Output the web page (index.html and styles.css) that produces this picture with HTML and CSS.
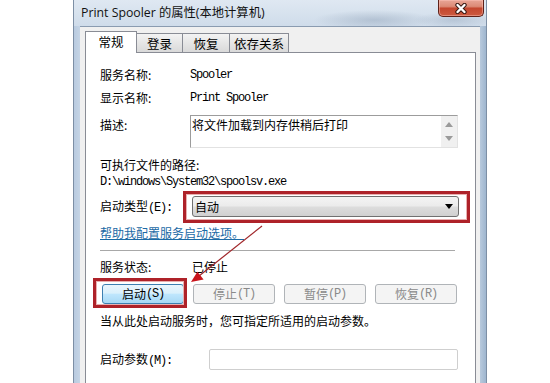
FILE: index.html
```html
<!DOCTYPE html>
<html>
<head>
<meta charset="utf-8">
<link rel="stylesheet" href="styles.css">
</head>
<body>
<div class="window">
  <div class="titlebar">
    <span class="title">Print Spooler 的属性(本地计算机)</span>
    <div class="close">
      <svg width="14" height="11" viewBox="0 0 14 11">
        <path d="M3.5 2 L10.5 9 M10.5 2 L3.5 9" stroke="#3a1a14" stroke-width="4.4" stroke-linecap="round"/>
        <path d="M3.5 2 L10.5 9 M10.5 2 L3.5 9" stroke="#ffffff" stroke-width="2.4" stroke-linecap="round"/>
      </svg>
    </div>
  </div>
  <div class="client">
    <div class="tabs">
      <div class="tab active">常规</div>
      <div class="tab t2">登录</div>
      <div class="tab t3">恢复</div>
      <div class="tab t4">依存关系</div>
    </div>
    <div class="panel">
      <div class="row r1"><span class="label">服务名称:</span><span class="mono">Spooler</span></div>
      <div class="row r2"><span class="label">显示名称:</span><span class="mono">Print Spooler</span></div>
      <div class="row desc-row">
        <span class="label desc-label">描述:</span>
        <div class="desc-box">
          <span class="desc-text">将文件加载到内存供稍后打印</span>
          <div class="scroll">
            <svg width="8" height="5" viewBox="0 0 8 5"><path d="M0 5 L4 0 L8 5 Z" fill="#9a9a9a"/></svg>
            <svg width="8" height="5" viewBox="0 0 8 5"><path d="M0 0 L4 5 L8 0 Z" fill="#9a9a9a"/></svg>
          </div>
        </div>
      </div>
      <div class="row exe-label">可执行文件的路径:</div>
      <div class="row path mono">D:\windows\System32\spoolsv.exe</div>
      <div class="row combo-row">
        <span class="label combo-label">启动类型<span class="mk">(E):</span></span>
        <div class="combo">
          <span class="combo-text">自动</span>
          <svg width="8" height="5" viewBox="0 0 8 5"><path d="M0 0 L8 0 L4 5 Z" fill="#000"/></svg>
        </div>
      </div>
      <a class="link">帮助我配置服务启动选项。</a>
      <div class="sep"></div>
      <div class="row status"><span class="label">服务状态:</span><span class="status-val">已停止</span></div>
      <div class="buttons">
        <div class="btn start">启动<span class="mk">(S)</span></div>
        <div class="btn">停止<span class="mk">(T)</span></div>
        <div class="btn">暂停<span class="mk">(P)</span></div>
        <div class="btn">恢复<span class="mk">(R)</span></div>
      </div>
      <div class="row hint">当从此处启动服务时，您可指定所适用的启动参数。</div>
      <div class="row param"><span class="label param-label">启动参数<span class="mk">(M):</span></span><div class="param-input"></div></div>
    </div>
  </div>
</div>
<svg class="arrow" width="550" height="383" viewBox="0 0 550 383">
  <line x1="262" y1="226" x2="199" y2="276" stroke="#a0262a" stroke-width="1.2"/>
  <path d="M191 282 L197.4 271.8 L203.6 279.6 Z" fill="#c8141c"/>
</svg>
</body>
</html>
```

FILE: styles.css
```css
* { box-sizing: border-box; }
html, body { margin: 0; padding: 0; }
body {
  width: 550px;
  height: 383px;
  overflow: hidden;
  background: #ffffff;
  font-family: "Noto Sans CJK SC", sans-serif;
  font-size: 12px;
  color: #000;
  position: relative;
}
.window {
  margin-left: 73px;
  width: 414px;
  height: 400px;
  border-left: 1px solid #7d8fa5;
  border-right: 1px solid #7d8fa5;
  background: linear-gradient(90deg, #b9cbe0 0%, #d2deeb 3%, #d2deeb 97%, #9fb6cf 100%);
  display: flex;
  flex-direction: column;
}
.titlebar {
  height: 26px;
  display: flex;
  align-items: flex-start;
  padding-left: 7px;
  padding-right: 2px;
  background:
    radial-gradient(ellipse 60px 10px at 300px 20px, rgba(120,140,165,0.35), rgba(120,140,165,0) 100%),
    radial-gradient(ellipse 40px 8px at 380px 20px, rgba(120,140,165,0.3), rgba(120,140,165,0) 100%),
    linear-gradient(180deg, #dfe8f2 0%, #cfdcea 100%);
}
.title {
  line-height: 26px;
  font-family: "Open Sans", "Noto Sans CJK SC", sans-serif;
  font-size: 12.3px;
  color: #111;
}
.close {
  margin-left: auto;
  width: 46px;
  height: 17px;
  border: 1px solid #5e2119;
  border-top: none;
  border-radius: 0 0 5px 5px;
  background: linear-gradient(180deg, #e8a596 0%, #dc8a76 40%, #c4472f 52%, #cc5a40 100%);
  display: flex;
  align-items: center;
  justify-content: center;
  box-shadow: inset 0 0 0 1px rgba(255,200,190,0.45);
}
.client {
  flex: 1;
  margin: 0 6px;
  background: #f0f0f0;
  border-top: 1px solid #8a9bb0;
  padding: 4px 4px 0 5px;
  display: flex;
  flex-direction: column;
}
.tabs {
  display: flex;
  align-items: flex-end;
  height: 22px;
  margin-bottom: -1px;
  position: relative;
  z-index: 1;
}
.tab {
  height: 19px;
  margin-bottom: 1px;
  border: 1px solid #898c95;
  border-bottom: none;
  border-left: none;
  background: linear-gradient(180deg, #f3f3f3 0%, #e6e6e6 50%, #d9d9d9 100%);
  display: flex;
  align-items: center;
  justify-content: center;
  line-height: 18px;
  padding-top: 1px;
  font-size: 12.5px;
}
.tab.active {
  width: 52px;
  height: 22px;
  margin-bottom: 0;
  background: #ffffff;
  border-left: 1px solid #898c95;
  padding-top: 0;
  padding-bottom: 2px;
}
.t2 { width: 46px; }
.t3 { width: 47px; }
.t4 { width: 59px; }
.panel {
  flex: 1;
  background: #ffffff;
  border: 1px solid #898c95;
  border-bottom: none;
  padding: 13px 0 0 14px;
  display: flex;
  flex-direction: column;
  align-items: flex-start;
}
.row {
  display: flex;
  align-items: center;
  height: 18px;
  line-height: 18px;
}
.label { width: 90px; flex-shrink: 0; }
.mono {
  font-family: "Liberation Mono", monospace;
  font-size: 12px;
  letter-spacing: -1.2px;
}
.mk {
  font-family: "Liberation Mono", monospace;
  font-size: 12px;
  letter-spacing: -1.2px;
}
.r2 { margin-top: 5px; }
.desc-row {
  margin-top: 8px;
  height: 33px;
  align-items: flex-start;
}
.desc-label { padding-top: 1px; }
.desc-box {
  width: 268px;
  height: 33px;
  border: 1px solid;
  border-color: #9c9c9c #e2e2e2 #e2e2e2 #9c9c9c;
  display: flex;
  justify-content: space-between;
}
.desc-text { padding: 1px 0 0 1px; line-height: 16px; }
.scroll {
  width: 16px;
  height: 31px;
  background: #f0f0f0;
  display: flex;
  flex-direction: column;
  align-items: center;
  justify-content: space-between;
  padding: 6px 0 6px;
}
.exe-label { margin-top: 8px; }
.path { height: 16px; line-height: 16px; }
.combo-row { margin-top: 6px; height: 21px; }
.combo-label { width: 92px; }
.combo {
  position: relative;
  width: 267px;
  height: 21px;
  border: 1px solid #707070;
  border-radius: 3px;
  background: linear-gradient(180deg, #f4f4f4 0%, #ebebeb 48%, #dddddd 52%, #d0d0d0 100%);
  display: flex;
  align-items: center;
  justify-content: space-between;
  padding: 0 5px 0 2px;
}
.combo::after {
  content: "";
  position: absolute;
  left: -10px;
  top: -6px;
  right: -12px;
  bottom: -7px;
  border: 3px solid #ae2229;
  box-shadow: inset 0 0 0 1px #e8b0b0;
}
.combo-text { line-height: 19px; }
.link {
  margin-top: 8px;
  height: 16px;
  line-height: 16px;
  color: #1b6aa5;
  text-decoration: underline;
}
.sep {
  margin-top: 9px;
  width: 355px;
  height: 1px;
  background: #a8a8a8;
}
.status { margin-top: 7px; }
.status-val { padding-left: 2px; }
.buttons {
  margin-top: 8px;
  margin-left: 2px;
  display: flex;
  gap: 9px;
}
.btn {
  width: 82px;
  height: 20px;
  border: 1px solid #b0b4b8;
  border-radius: 3px;
  background: #f4f4f4;
  color: #8a8a8a;
  display: flex;
  align-items: center;
  justify-content: center;
  line-height: 18px;
}
.btn.start {
  position: relative;
  color: #000;
  border-color: #3c7fb1;
  background: linear-gradient(180deg, #eaf6fd 0%, #d9f0fc 45%, #bee6fd 52%, #a7d9f5 100%);
}
.btn.start::after {
  content: "";
  position: absolute;
  left: -10px;
  top: -7px;
  right: -4px;
  bottom: -5px;
  border: 3px solid #ae2229;
  box-shadow: inset 0 0 0 1px #e8b0b0;
}
.hint { margin-top: 9px; height: 16px; line-height: 16px; }
.param { margin-top: 20px; height: 21px; }
.param-label { width: 109px; }
.param-input {
  width: 249px;
  height: 21px;
  border: 1px solid #cfcfcf;
  border-radius: 2px;
  background: #fff;
}
.arrow {
  position: absolute;
  left: 0;
  top: 0;
  pointer-events: none;
}
```
